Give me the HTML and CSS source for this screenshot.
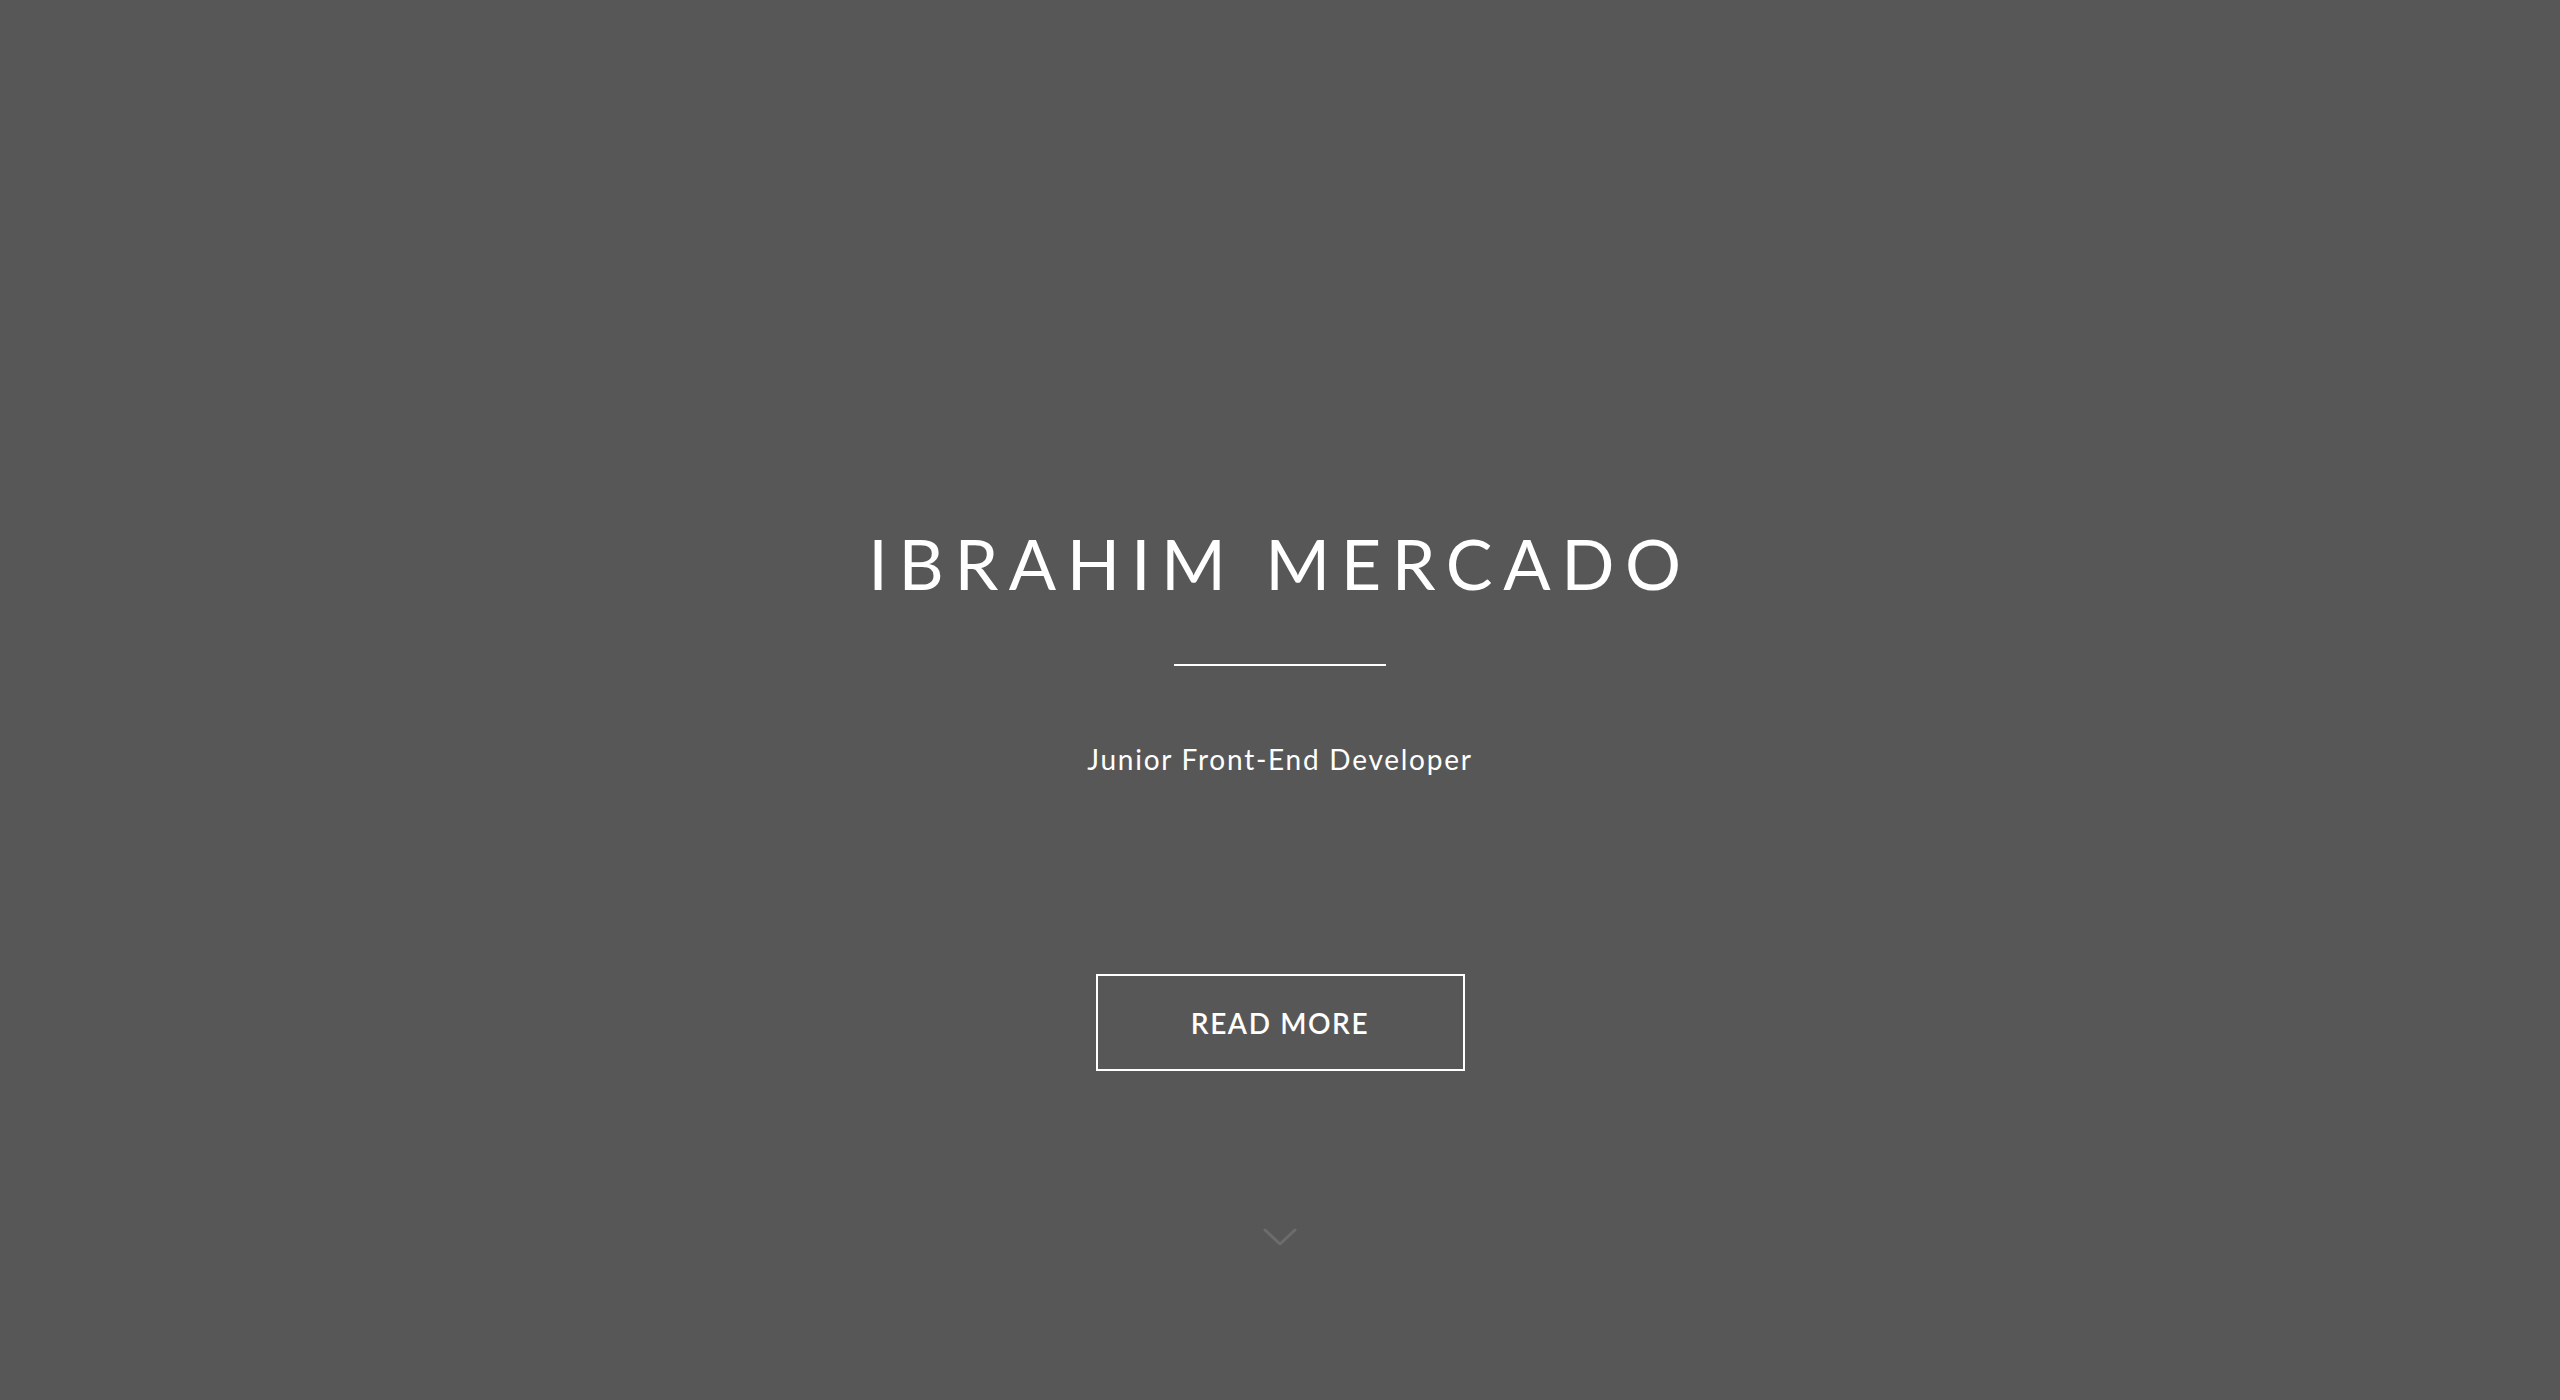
FILE: index.html
```html
<!DOCTYPE html>
<html lang="en">
<head>
<meta charset="utf-8">
<title>Ibrahim Mercado</title>
<link rel="stylesheet" href="styles.css">
</head>
<body>
<header class="hero">
  <h1 class="hero-title">IBRAHIM MERCADO</h1>
  <hr class="hero-rule">
  <p class="hero-subtitle">Junior Front-End Developer</p>
  <a class="hero-button" href="#about">READ MORE</a>
  <a class="hero-scroll" href="#about" aria-label="Scroll down">
    <svg width="34" height="19" viewBox="0 0 34 19"><path d="M2 2 L17 16 L32 2" fill="none" stroke="#6c6c6c" stroke-width="3" stroke-linecap="round" stroke-linejoin="round"/></svg>
  </a>
</header>
</body>
</html>
```
FILE: styles.css
```css
html, body {
  margin: 0;
  padding: 0;
  background: #575757;
}
body {
  font-family: Lato, "Open Sans", sans-serif;
  color: #ffffff;
}
.hero {
  height: 1400px;
  box-sizing: border-box;
  padding-top: 521px;
  display: flex;
  flex-direction: column;
  align-items: center;
}
.hero-title {
  margin: 0;
  font-size: 70px;
  font-weight: 400;
  line-height: 84px;
  letter-spacing: 10.6px;
}
.hero-rule {
  margin: 59px 0 0;
  width: 212px;
  height: 2px;
  border: 0;
  background: #ffffff;
}
.hero-subtitle {
  margin: 77px 0 0;
  font-size: 28px;
  font-weight: 400;
  line-height: 32px;
  letter-spacing: 1.75px;
}
.hero-button {
  margin-top: 199px;
  box-sizing: border-box;
  width: 369px;
  height: 97px;
  border: 2px solid #ffffff;
  display: flex;
  align-items: center;
  justify-content: center;
  color: #ffffff;
  text-decoration: none;
  font-size: 28px;
  font-weight: 600;
  letter-spacing: 1.6px;
}
.hero-scroll {
  margin-top: 157px;
  display: block;
  line-height: 0;
}
```
